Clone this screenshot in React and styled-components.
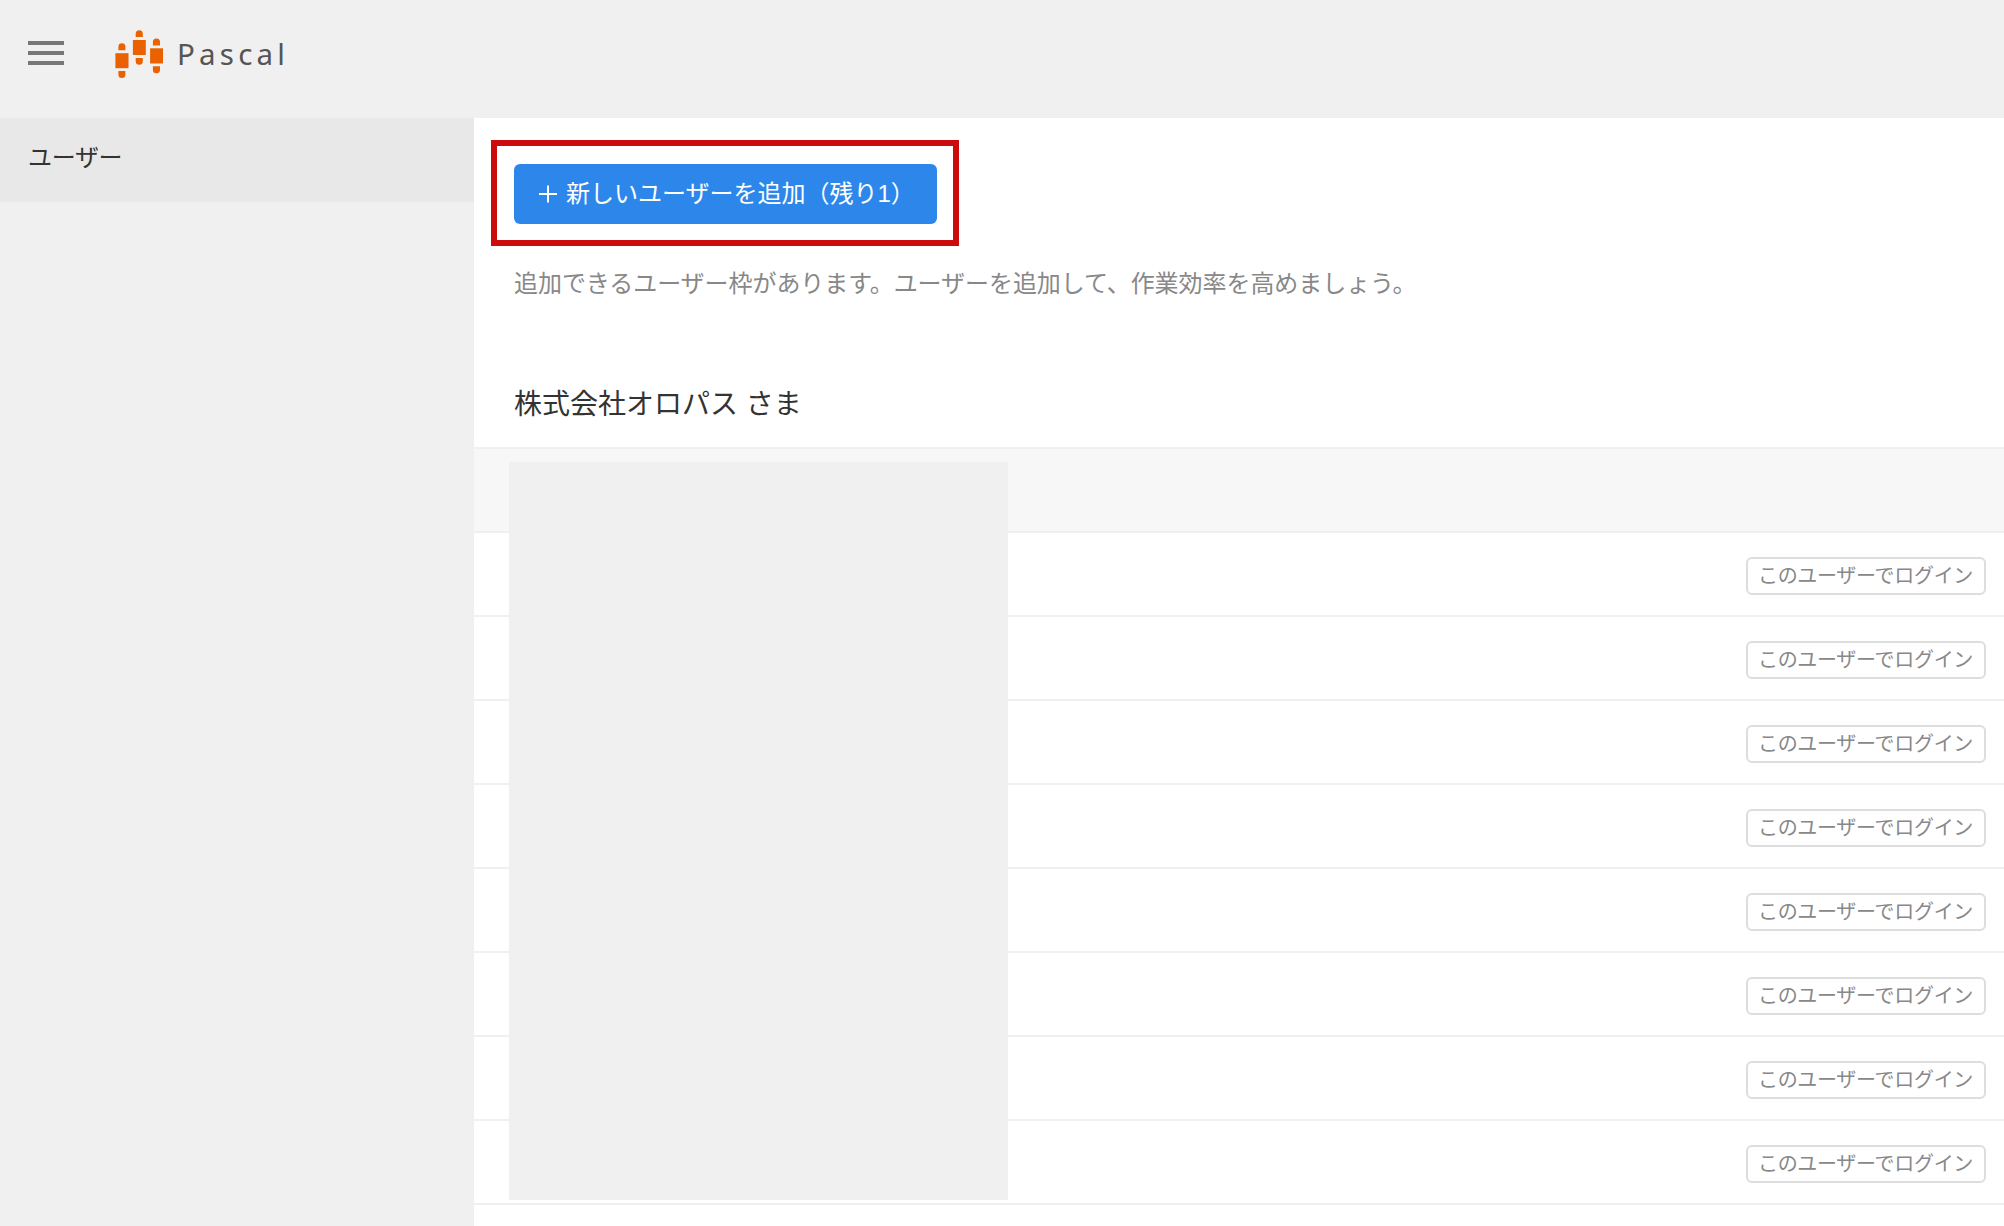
import React from 'react';
import styled, { createGlobalStyle } from 'styled-components';

const GlobalStyle = createGlobalStyle`
    * {
        box-sizing: border-box;
    }
    body {
        margin: 0;
        background: #FFFFFF;
        color: #333333;
        font-family: "Liberation Sans", "Noto Sans CJK JP", sans-serif;
        font-size: 24px;
        overflow: hidden;
    }
    button {
        font-family: inherit;
        cursor: pointer;
    }
`;

const users = [1, 2, 3, 4, 5, 6, 7, 8];

function Logo() {
    return (
        <LogoStyled>
            <svg width="50" height="50" viewBox="0 0 50 50" fill="#EB6100">
                <path d="M4.4 20.2v-3.4a3.5 3.5 0 0 1 7 0v3.4z" />
                <rect x="1.4" y="23.2" width="13.1" height="15" />
                <path d="M4.4 41v3.4a3.5 3.5 0 0 0 7 0V41z" />
                <path d="M21.7 7.1V3.7a3.5 3.5 0 0 1 7.1 0v3.4z" />
                <rect x="18.9" y="10" width="12.9" height="15" />
                <path d="M21.7 28v3.2a3.5 3.5 0 0 0 7.1 0V28z" />
                <path d="M38.9 15.4V12a3.5 3.5 0 0 1 7.1 0v3.4z" />
                <rect x="36.1" y="18.3" width="12.9" height="15.2" />
                <path d="M38.9 36.3v3.5a3.5 3.5 0 0 0 7.1 0v-3.5z" />
            </svg>
            <span>Pascal</span>
        </LogoStyled>
    );
}

function UserRow() {
    return (
        <Row>
            <LoginButton>このユーザーでログイン</LoginButton>
        </Row>
    );
}

function App() {
    return (
        <PageStyled>
            <GlobalStyle />
            <Header>
                <MenuButton aria-label="menu">
                    <i />
                    <i />
                    <i />
                </MenuButton>
                <Logo />
            </Header>
            <Body>
                <Sidebar>
                    <SidebarItem>ユーザー</SidebarItem>
                </Sidebar>
                <Main>
                    <Highlight>
                        <AddButton>
                            <svg width="18" height="18" viewBox="0 0 18 18" stroke="#FFFFFF" strokeWidth="2">
                                <path d="M9 0.5v17M0 9h18" />
                            </svg>
                            <span>新しいユーザーを追加（残り1）</span>
                        </AddButton>
                    </Highlight>
                    <Description>追加できるユーザー枠があります。ユーザーを追加して、作業効率を高めましょう。</Description>
                    <Company>株式会社オロパス さま</Company>
                    <Table>
                        <Row $head />
                        {users.map((id) => (
                            <UserRow key={id} />
                        ))}
                        <Mask />
                    </Table>
                </Main>
            </Body>
        </PageStyled>
    );
}

const PageStyled = styled.div`
    display: flex;
    flex-direction: column;
    height: 100vh;
`;

const Header = styled.header`
    display: flex;
    align-items: flex-start;
    flex-shrink: 0;
    height: 118px;
    padding: 30px 28px 0;
    background: #F0F0F0;
`;

const MenuButton = styled.button`
    display: flex;
    flex-direction: column;
    gap: 6px;
    width: 36px;
    margin: 11px 50px 0 0;
    padding: 0;
    border: 0;
    background: none;
    i {
        height: 4px;
        background: #777777;
    }
`;

const LogoStyled = styled.div`
    display: flex;
    span {
        margin-left: 13px;
        padding-top: 4px;
        font-family: "Noto Sans", sans-serif;
        font-size: 29.5px;
        line-height: 40px;
        letter-spacing: 4.2px;
        color: #555555;
    }
`;

const Body = styled.div`
    display: flex;
    flex: 1;
    min-height: 0;
`;

const Sidebar = styled.nav`
    width: 474px;
    flex-shrink: 0;
    background: #F0F0F0;
`;

const SidebarItem = styled.div`
    height: 84px;
    padding: 22px 28px;
    background: #E8E8E8;
    line-height: 36px;
    letter-spacing: -0.3px;
`;

const Main = styled.main`
    flex: 1;
    padding-top: 22px;
`;

const Highlight = styled.div`
    width: 468px;
    height: 106px;
    margin-left: 17px;
    padding: 18px 17px;
    border: 6px solid #CC0C0C;
`;

const AddButton = styled.button`
    display: flex;
    align-items: center;
    width: 423px;
    height: 60px;
    padding: 0 0 0 25px;
    border: 0;
    border-radius: 6px;
    background: #2D87EB;
    color: #FFFFFF;
    font-size: 24px;
    line-height: 36px;
    white-space: nowrap;
    svg {
        margin-right: 9px;
    }
`;

const Description = styled.p`
    margin: 20px 0 0 40px;
    line-height: 36px;
    color: #888888;
    letter-spacing: -0.06px;
`;

const Company = styled.h1`
    margin: 82px 0 21px 40px;
    font-size: 28px;
    font-weight: 400;
    line-height: 42px;
`;

const Table = styled.div`
    position: relative;
    border-top: 2px solid #F0F0F0;
`;

const Row = styled.div`
    display: flex;
    align-items: flex-start;
    justify-content: flex-end;
    height: 84px;
    padding: 24px 18px 0 0;
    border-bottom: 2px solid #F0F0F0;
    background: ${(props) => (props.$head ? '#F7F7F7' : '#FFFFFF')};
`;

const LoginButton = styled.button`
    width: 240px;
    height: 38px;
    padding: 0 1px 0 0;
    border: 2px solid #DDDDDD;
    border-radius: 6px;
    background: #FFFFFF;
    color: #888888;
    font-size: 20px;
    line-height: 30px;
    letter-spacing: -0.3px;
    white-space: nowrap;
`;

/* covers the name column */
const Mask = styled.div`
    position: absolute;
    top: 13px;
    left: 35px;
    width: 499px;
    height: 738px;
    background: #F0F0F0;
`;

export default App;
